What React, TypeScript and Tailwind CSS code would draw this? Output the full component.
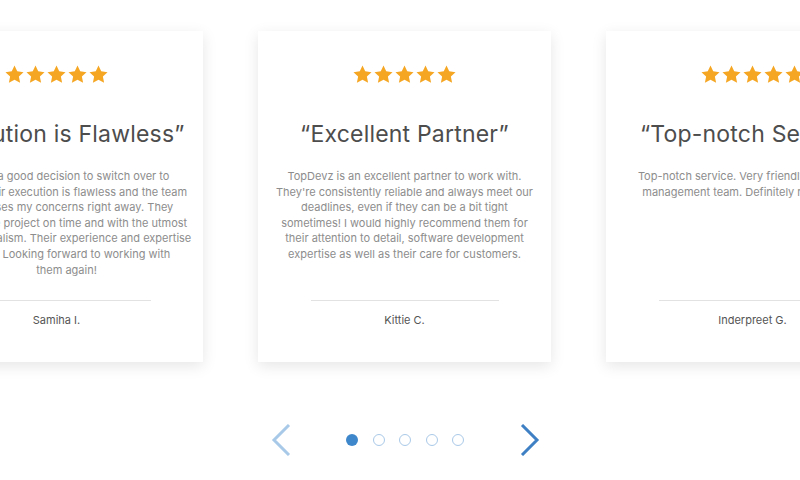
type Review = {
  title: string
  lines: string[]
  name: string
  shift?: boolean
}

const reviews: Review[] = [
  {
    title: '“Execution is Flawless”',
    lines: [
      'It was a good decision to switch over to',
      'them. Their execution is flawless and the team',
      'addresses my concerns right away. They',
      'deliver the project on time and with the utmost',
      'professionalism. Their experience and expertise',
      'shows. Looking forward to working with',
      'them again!',
    ],
    name: 'Samiha I.',
    shift: true,
  },
  {
    title: '“Excellent Partner”',
    lines: [
      'TopDevz is an excellent partner to work with.',
      "They're consistently reliable and always meet our",
      'deadlines, even if they can be a bit tight',
      'sometimes! I would highly recommend them for',
      'their attention to detail, software development',
      'expertise as well as their care for customers.',
    ],
    name: 'Kittie C.',
  },
  {
    title: '“Top-notch Service”',
    lines: ['Top-notch service. Very friendly and helpful', 'management team. Definitely recommend.'],
    name: 'Inderpreet G.',
  },
]

function Star() {
  return (
    <svg viewBox="0 0 24 24" className="w-[21px] h-[21px]" fill="#f5a623">
      <path d="M12 1.8l3.1 6.6 7.2.9-5.3 5 1.4 7.1L12 17.9l-6.4 3.5L7 14.3l-5.3-5 7.2-.9z" />
    </svg>
  )
}

function Card({ review }: { review: Review }) {
  return (
    <div className="w-[293px] h-[331px] shrink-0 bg-white flex flex-col items-center px-[16px] pt-[33px] shadow-[0_4px_14px_rgba(0,0,0,0.10)]">
      <div className="flex">
        {[0, 1, 2, 3, 4].map((i) => (
          <Star key={i} />
        ))}
      </div>
      <h2 className="mt-[34px] text-[23px] leading-[30px] text-[#4d4d4d] whitespace-nowrap tracking-[0.2px]">
        {review.title}
      </h2>
      <p
        className={`mt-[20px] text-[11px] leading-[15.6px] text-[#8d8d8d] text-center h-[112px] whitespace-nowrap ${
          review.shift ? 'pl-[20px]' : ''
        }`}
      >
        {review.lines.map((l, i) => (
          <span key={i} className="block">
            {l}
          </span>
        ))}
      </p>
      <div className="mt-[19px] w-[188px] h-px bg-[#e2e2e2]" />
      <div className="mt-[11px] text-[11px] leading-4 text-[#555]">{review.name}</div>
    </div>
  )
}

function Chevron({ dir, color }: { dir: 'left' | 'right'; color: string }) {
  return (
    <svg viewBox="0 0 20 32" className="w-[20px] h-[32px]" fill="none" stroke={color} strokeWidth={3}>
      <path d={dir === 'left' ? 'M18 1 L3 16 L18 31' : 'M2 1 L17 16 L2 31'} />
    </svg>
  )
}

export default function App() {
  return (
    <div
      className="w-[800px] h-[480px] bg-white overflow-hidden flex flex-col"
      style={{ fontFamily: 'Inter, "Open Sans", sans-serif' }}
    >
      <div className="flex gap-[55px] ml-[-90px] pt-[31px]">
        {reviews.map((r) => (
          <Card key={r.name} review={r} />
        ))}
      </div>

      <div className="mt-[62px] flex items-center ml-[271px]">
        <Chevron dir="left" color="#a9c9e8" />
        <div className="ml-[55px] mr-[56px] flex gap-[14.5px]">
          <span className="w-[12px] h-[12px] rounded-full bg-[#3f87cb]" />
          {[0, 1, 2, 3].map((i) => (
            <span key={i} className="w-[12px] h-[12px] rounded-full border-[1.5px] border-[#a9c9e8]" />
          ))}
        </div>
        <Chevron dir="right" color="#3f80c4" />
      </div>
    </div>
  )
}
